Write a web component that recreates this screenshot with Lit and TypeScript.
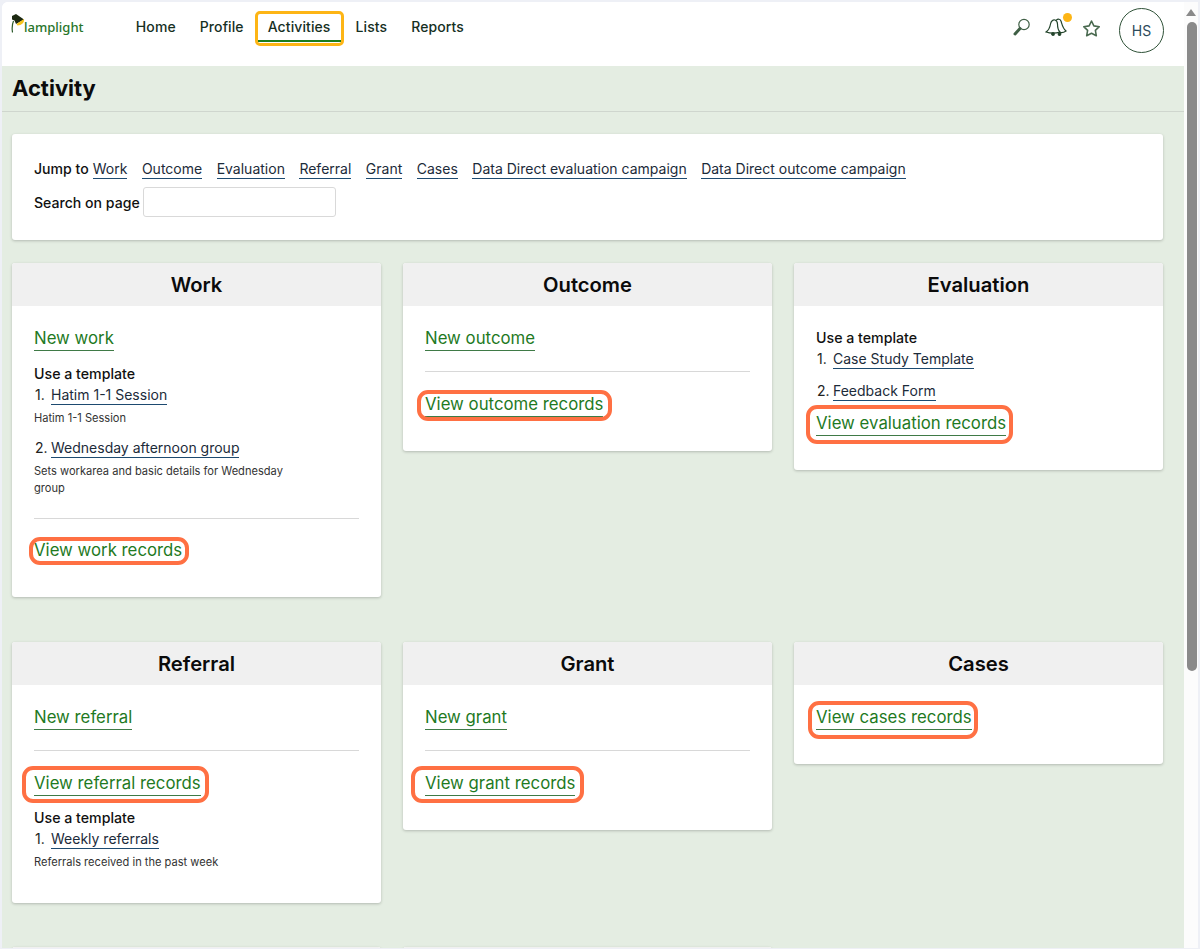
import { LitElement, css, html, nothing } from 'lit';
import { customElement } from 'lit/decorators.js';

type Template = { name: string; note?: string[] };
type Card = {
    title: string;
    mark: string;
    fresh?: string;
    view: string;
    templates?: Template[];
    layout: 'top' | 'bottom' | 'none';
};

const jumps = ['Work', 'Outcome', 'Evaluation', 'Referral', 'Grant', 'Cases',
    'Data Direct evaluation campaign', 'Data Direct outcome campaign'];

const cards: Card[] = [
    {
        title: 'Work', mark: 'm-work', fresh: 'New work', view: 'View work records', layout: 'top',
        templates: [
            { name: 'Hatim 1-1 Session', note: ['Hatim 1-1 Session'] },
            { name: 'Wednesday afternoon group', note: ['Sets workarea and basic details for Wednesday', 'group'] },
        ],
    },
    { title: 'Outcome', mark: 'm-outcome', fresh: 'New outcome', view: 'View outcome records', layout: 'top' },
    {
        title: 'Evaluation', mark: 'm-eval', view: 'View evaluation records', layout: 'none',
        templates: [{ name: 'Case Study Template' }, { name: 'Feedback Form' }],
    },
    {
        title: 'Referral', mark: 'm-ref', fresh: 'New referral', view: 'View referral records', layout: 'bottom',
        templates: [{ name: 'Weekly referrals', note: ['Referrals received in the past week'] }],
    },
    { title: 'Grant', mark: 'm-grant', fresh: 'New grant', view: 'View grant records', layout: 'top' },
    { title: 'Cases', mark: 'm-cases', view: 'View cases records', layout: 'none' },
];

@customElement('app-root')
export class AppRoot extends LitElement {
    static styles = css`
    :host {
      display: block;
      height: 949px;
      overflow: hidden;
      box-sizing: border-box;
      background: #eef0f6;
      padding: 2px 2px 1px;
      font-family: Inter, "Noto Sans", sans-serif;
      color: #111;
    }

    .window {
      display: flex;
      height: 100%;
      overflow: hidden;
      border-top-left-radius: 6px;
      background: #fff;
    }

    .page {
      flex: 1;
      min-width: 0;
      display: flex;
      flex-direction: column;
    }

    /* top bar */
    .topbar {
      height: 64px;
      flex: none;
      display: flex;
      align-items: flex-start;
      background: #fff;
    }

    .logo {
      display: flex;
      align-items: flex-start;
      width: 112.800px;
      height: 24px;
      margin: 11px 0 0 9px;
      flex: none;
    }

    .logo svg {
      width: 14px;
      height: 20px;
      flex: none;
    }

    .logo span {
      font-family: "Noto Sans", sans-serif;
      font-size: 13px;
      line-height: 17px;
      font-weight: 500;
      color: #27752a;
      margin: 6px 0 0 -1px;
    }

    .nav {
      display: flex;
      margin-top: 9px;
    }

    .nav a {
      display: block;
      box-sizing: border-box;
      height: 35px;
      padding: 7px 12px 0;
      font-size: 14px;
      line-height: 18px;
      font-weight: 500;
      letter-spacing: 0.1px;
      color: #16301f;
      white-space: nowrap;
    }

    .nav a.active {
      border: 3px solid #fdb515;
      border-radius: 5px;
      padding: 4px 10px 0;
      margin-left: -1px;
      position: relative;
    }

    .nav a.active::after {
      content: '';
      position: absolute;
      left: 0;
      right: 0;
      bottom: 1px;
      height: 2px;
      background: #1c7d1c;
    }

    .tools {
      margin-left: auto;
      display: flex;
      align-items: flex-start;
      margin-top: 6px;
      margin-right: 20px;
    }

    .tools svg {
      flex: none;
      display: block;
    }

    .bell {
      position: relative;
      margin-left: 13px;
      margin-top: 10px;
    }

    .bell::after {
      content: '';
      position: absolute;
      top: -5px;
      right: -5px;
      width: 9px;
      height: 9px;
      border-radius: 50%;
      background: #fdb515;
    }

    .search { margin-top: 10px; }
    .star { margin: 11px 0 0 15px; }

    .avatar {
      box-sizing: border-box;
      width: 45px;
      height: 45px;
      margin-left: 18px;
      border: 1px solid #2f5238;
      border-radius: 50%;
      display: flex;
      align-items: center;
      justify-content: center;
      font-size: 14px;
      color: #2c4a5a;
    }

    /* body */
    .content {
      flex: 1;
      background: #e4ede2;
      overflow: hidden;
    }

    .title {
      height: 46px;
      box-sizing: border-box;
      border-bottom: 1px solid #cfd6ce;
      padding: 7px 10px 0;
      font-size: 22px;
      line-height: 30px;
      font-weight: 700;
      color: #0b0b0b;
      margin: 0;
    }

    .panel {
      box-sizing: border-box;
      height: 106px;
      margin: 22px 21px 0 10px;
      padding: 25px 22px 0;
      background: #fff;
      border-radius: 3px;
      box-shadow: 0 1px 3px rgba(0, 0, 0, 0.22);
    }

    .jump {
      display: flex;
      align-items: baseline;
      font-size: 14.100px;
      line-height: 20px;
      font-weight: 500;
    }

    .jump a {
      margin-left: 14.500px;
      font-size: 14px;
      font-weight: 400;
      color: #1c2b3a;
      border-bottom: 1px solid #1d4a70;
      line-height: 18px;
    }

    .jump a:first-of-type { margin-left: 4px; }

    .find {
      display: flex;
      align-items: center;
      margin-top: 8px;
      font-size: 14.100px;
      font-weight: 500;
    }

    .find input {
      box-sizing: border-box;
      width: 193px;
      height: 30px;
      margin-left: 3px;
      border: 1px solid #d9d9d9;
      border-radius: 3px;
      background: #fff;
    }

    .grid {
      display: grid;
      grid-template-columns: repeat(3, 1fr);
      column-gap: 22px;
      row-gap: 45px;
      align-items: start;
      margin: 23px 21px 0 10px;
    }

    .card {
      background: #fff;
      border-radius: 3px;
      box-shadow: 0 1px 3px rgba(0, 0, 0, 0.22);
      overflow: hidden;
    }

    .card.next { margin-top: -1px; }

    .card h2 {
      margin: 0;
      height: 43px;
      background: #f0f0f0;
      text-align: center;
      font-size: 20.200px;
      line-height: 43px;
      font-weight: 600;
      color: #0b0b0b;
    }

    .body {
      padding: 21px 22px 34px;
    }

    .body.bottom { padding-bottom: 32px; }

    .big {
      display: table;
      position: relative;
      font-size: 16.800px;
      line-height: 22px;
      height: 24px;
      box-sizing: border-box;
      color: #1f7a1f;
      border-bottom: 1px solid #3f7a46;
    }

    /* the orange annotation rings sit over the links */
    .ring::after {
      content: '';
      position: absolute;
      box-sizing: border-box;
      border: 4px solid #ff7043;
      border-radius: 11px;
    }

    .m-work::after { inset: -2px -7px -3px -5px; }
    .m-outcome::after { inset: -3px -9px -5px -8px; }
    .m-eval::after { inset: -7px -7px -9px -10px; }
    .m-ref::after { inset: -6px -8px -8px -12px; }
    .m-grant::after { inset: -6px -9px -8px -14px; }
    .m-cases::after { inset: -5px -6px -10px -8px; }

    hr {
      border: 0;
      border-top: 1px solid #d8d8d8;
      margin: 20px 0 21px;
    }

    .note + hr { margin: 21px 0 20px; }

    .tpl-head {
      font-size: 14.200px;
      line-height: 20px;
      font-weight: 500;
      color: #111;
    }

    .head-first { margin-top: 1px; }
    .after-new { margin-top: 13px; }
    .after-view { margin-top: 12px; }

    .tpl {
      display: flex;
      font-size: 14px;
      line-height: 18px;
      margin-top: 2px;
      color: #222;
    }

    .tpl + .note { margin-top: 5px; }

    .tpl .num { width: 17px; flex: none; padding-left: 1px; box-sizing: border-box; }

    .tpl a {
      color: #1c2b3a;
      border-bottom: 1px solid #1d4a70;
    }

    .note {
      font-size: 11.100px;
      line-height: 17px;
      color: #333;
    }

    .gap-tight { margin-top: 13px; }
    .gap-note { margin-top: 12px; }
    .card-view { margin-top: 11px; }

    /* scrollbar */
    .bar {
      width: 14px;
      flex: none;
      background: #fcfcfc;
    }

    .bar .arrow {
      margin: 7px auto 0;
      width: 0;
      height: 0;
      border-left: 5px solid transparent;
      border-right: 5px solid transparent;
      border-bottom: 7px solid #8a8a8a;
    }

    .bar .thumb {
      margin: 6px 1px 0 3px;
      height: 649px;
      background: #8a8a8a;
      border-radius: 5px;
    }
  `;

    private renderTemplates(card: Card) {
        if (!card.templates) return nothing;
        const first = card.layout === 'top' ? 'after-new' : card.layout === 'bottom' ? 'after-view' : 'head-first';
        return html`
      <div class="tpl-head ${first}">Use a template</div>
      ${card.templates.map((t, i) => html`
        <div class="tpl ${i > 0 ? (t.note ? 'gap-note' : 'gap-tight') : ''}">
          <span class="num">${i + 1}.</span><a>${t.name}</a>
        </div>
        ${t.note ? html`<div class="note">${t.note.map(n => html`<div>${n}</div>`)}</div>` : nothing}
      `)}`;
    }

    private renderCard(card: Card) {
        const view = html`<a class="big ring ${card.mark}">${card.view}</a>`;
        let inner;
        if (card.layout === 'top') {
            inner = html`
        <a class="big">${card.fresh}</a>
        ${this.renderTemplates(card)}
        <hr />
        ${view}`;
        } else if (card.layout === 'bottom') {
            inner = html`
        <a class="big">${card.fresh}</a>
        <hr />
        ${view}
        ${this.renderTemplates(card)}`;
        } else {
            inner = html`
        ${this.renderTemplates(card)}
        ${card.templates ? html`<div class="card-view">${view}</div>` : view}`;
        }
        return html`
      <section class="card">
        <h2>${card.title}</h2>
        <div class="body ${card.layout}">${inner}</div>
      </section>`;
    }

    render() {
        return html`
      <div class="window">
        <div class="page">
          <header class="topbar">
            <div class="logo">
              <svg viewBox="0 0 14 20">
                <path d="M1 3 5 1l8 5.500-8 4.500-1.500-3.500L1 6.500z" fill="#1d2a12" />
                <path d="M13 6c.8 3-2.500 6.500-6.500 6.500L5.500 11z" fill="#f7c51e" />
                <path d="M2.500 8C1.200 11 .8 15 1.500 19.500" stroke="#2b5a2b" stroke-width="1.200" fill="none" />
              </svg>
              <span>lamplight</span>
            </div>
            <nav class="nav">
              <a>Home</a>
              <a>Profile</a>
              <a class="active">Activities</a>
              <a>Lists</a>
              <a>Reports</a>
            </nav>
            <div class="tools">
              <svg class="search" width="20" height="20" viewBox="0 0 20 20" fill="none" stroke="#3f5f45">
                <circle cx="12" cy="6.500" r="5.200" stroke-width="1.200" />
                <path d="M8 10.500 3 16" stroke-width="3" stroke-linecap="round" />
              </svg>
              <div class="bell">
                <svg width="22" height="18" viewBox="0 0 22 18" fill="none" stroke="#24452c" stroke-width="1.200">
                  <path d="M1 14C4 12 5 9 5.500 6 6 3 8 1.500 10 2c1.500.5 2.500 2 2.500 4 0 3 .5 6 2.500 8-4.500 1.500-9.500 1.500-14 0z" />
                  <path d="M11 2.500C13 .5 15.500 1 16 3c1 3 1.500 7 5 10-2 1.500-4 2-6 1.500" />
                  <circle cx="8" cy="16" r="1.300" fill="#24452c" />
                  <circle cx="14.500" cy="16" r="1.300" fill="#24452c" />
                </svg>
              </div>
              <svg class="star" width="19" height="19" viewBox="0 0 24 24" fill="none" stroke="#4a6a50" stroke-width="2" stroke-linejoin="round">
                <path d="M12 2.500l3 6.200 6.800 1-4.900 4.700 1.200 6.800-6.100-3.200-6.100 3.200 1.200-6.800-4.900-4.700 6.800-1z" />
              </svg>
              <div class="avatar">HS</div>
            </div>
          </header>
          <main class="content">
            <h1 class="title">Activity</h1>
            <div class="panel">
              <div class="jump">
                <span>Jump to</span>
                ${jumps.map(j => html`<a>${j}</a>`)}
              </div>
              <div class="find">
                <span>Search on page</span>
                <input type="text" />
              </div>
            </div>
            <div class="grid">
              ${cards.map(c => this.renderCard(c))}
              <section class="card next"><h2></h2></section>
              <section class="card next"><h2></h2></section>
            </div>
          </main>
        </div>
        <div class="bar">
          <div class="arrow"></div>
          <div class="thumb"></div>
        </div>
      </div>
    `;
    }
}
